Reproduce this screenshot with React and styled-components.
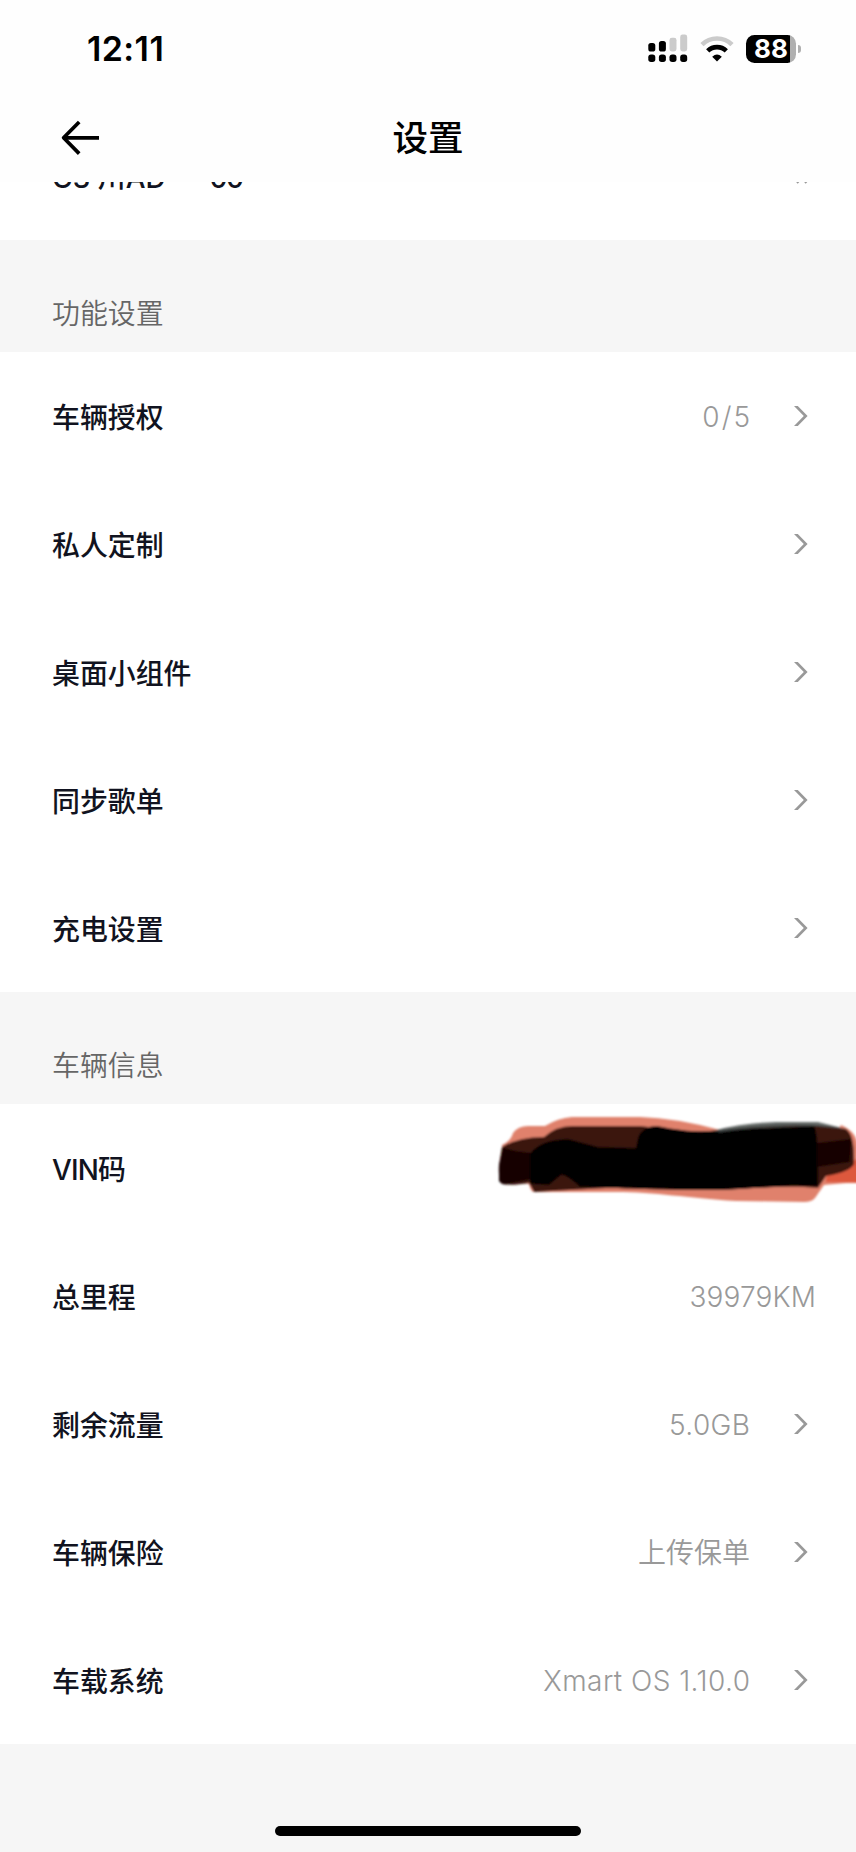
import React from 'react';
import styled, { createGlobalStyle } from 'styled-components';

const functionItems = [
  { label: '车辆授权', value: '0/5', spacing: 2, arrow: true },
  { label: '私人定制', arrow: true },
  { label: '桌面小组件', arrow: true },
  { label: '同步歌单', arrow: true },
  { label: '充电设置', arrow: true },
];

const vehicleItems = [
  { label: 'VIN码', labelSpacing: -0.8, hidden: true },
  { label: '总里程', value: '39979KM', spacing: 0.15 },
  { label: '剩余流量', value: '5.0GB', spacing: 0.4, arrow: true },
  { label: '车辆保险', value: '上传保单', arrow: true },
  { label: '车载系统', value: 'Xmart OS 1.10.0', spacing: 0.45, arrow: true },
];

const SignalIcon = () => (
  <svg width="40" height="30" viewBox="0 0 40 30">
    <rect x="0.3" y="9" width="7" height="8.5" rx="2.6" />
    <rect x="10.9" y="7" width="7" height="10.5" rx="2.6" />
    <rect x="21.5" y="3.8" width="7" height="13.7" rx="2.4" fill="#cbcbcb" />
    <rect x="32.2" y="0.5" width="7" height="17" rx="2.4" fill="#cbcbcb" />
    <rect x="0.3" y="20.5" width="7" height="7.4" rx="2.7" />
    <rect x="10.9" y="20.5" width="7" height="7.4" rx="2.7" />
    <rect x="21.5" y="20.5" width="7" height="7.4" rx="2.7" />
    <rect x="32.2" y="20.5" width="7" height="7.4" rx="2.7" />
  </svg>
);

const WifiIcon = () => (
  <svg width="34" height="26" viewBox="0 0 34 26" fill="none">
    <path d="M2 8.6 A21.5 21.5 0 0 1 32 8.6" stroke="#cbcbcb" strokeWidth="4.6" />
    <path d="M7.7 14.9 A13.3 13.3 0 0 1 26.3 14.9" stroke="#000" strokeWidth="4.6" />
    <path d="M17 25.5 L12.2 20.7 Q17 16.5 21.8 20.7 Z" fill="#000" />
  </svg>
);

const BackIcon = () => (
  <svg width="40" height="36" viewBox="0 0 40 36" fill="none" stroke="#000" strokeWidth="3.7">
    <path d="M19.2 2 L3.6 17.8 L19.2 33.6" strokeLinejoin="round" />
    <path d="M3.6 17.8 H39" />
  </svg>
);

const ArrowIcon = () => (
  <svg width="14" height="20" viewBox="0 0 14 20">
    <path d="M0 0 H3.8 L13.6 10 L3.8 20 H0 L9.8 10 Z" fill="#999" />
  </svg>
);

const DoubleArrowIcon = () => (
  <svg width="18" height="15" viewBox="0 0 18 15" fill="none" stroke="#999" strokeWidth="2">
    <path d="M2 1 L8 7.5 L2 14" />
    <path d="M10 1 L16 7.5 L10 14" />
  </svg>
);

// marker strokes painted over the VIN number
const MarkerStrokes = () => (
  <svg width="360" height="100" viewBox="0 0 360 100">
    <defs>
      <filter id="soft" x="-5%" y="-10%" width="110%" height="120%">
        <feGaussianBlur stdDeviation="1.2" />
      </filter>
    </defs>
    <g filter="url(#soft)">
      <path
        d="M6 41 Q15 37 17 29 Q22 22 32 22 L49 22 Q62 14 76 13 L144 13 Q180 14 224 26 L340 30 L345 21 Q362 28 362 45 L360 78 L328 81 L319 94 Q316 98 308 98 L240 97 C190 94 160 88 120 88 L38 88 Q35 88 33 80 L10 76 Z"
        fill="#e0816c"
      />
      <path d="M330 78 L331 67 L362 55 L362 79 Z" fill="#dd583e" />
      <path
        d="M6 43 Q22 33 48 33 Q60 22 76 22 L145 22 Q180 27 205 28 L232 25 Q290 18 330 22 L350 25 Q359 31 358 60 Q354 68 330 72 L322 84 C285 80 250 86 200 86 C150 86 130 84 110 84 L38 88 L33 79 Q15 82 6 80 Q2 75 3 61 Z"
        fill="#3b1810"
      />
      <path d="M7 44 L20 47 L44 50 L46 73 L15 79 Q6 82 3 77 L3 62 Z" fill="#140503" />
      <path
        d="M142 34 Q146 22 161 22 C195 29 210 28 240 25 L318 22 Q323 30 322 82 C280 80 250 87 200 86 L84 83 Q70 70 65 71 L53 81 L34 80 L34 50 Q43 36 72 35 L102 43 L140 44 Z"
        fill="#000"
      />
      <path d="M321 39 L355 35 L354 58 L321 63 Z" fill="#130402" />
      <path d="M217 27 Q245 19 280 18 L322 18 L350 25 L318 22 Q260 23 225 28 Z" fill="#4a5150" opacity="0.85" />
    </g>
  </svg>
);

const SettingRow = ({ item }) => (
  <Row>
    <RowLabel $spacing={item.labelSpacing}>{item.label}</RowLabel>
    {item.hidden && (
      <HiddenValue>
        <MarkerStrokes />
      </HiddenValue>
    )}
    {item.value && <RowValue $spacing={item.spacing}>{item.value}</RowValue>}
    {item.arrow && (
      <ArrowBox>
        <ArrowIcon />
      </ArrowBox>
    )}
  </Row>
);

const App = () => {
  return (
    <Screen>
      <GlobalStyle />
      <Header>
        <StatusBar>
          <Time>12:11</Time>
          <StatusIcons>
            <SignalIcon />
            <WifiIcon />
            <Battery>
              <BatteryBody>
                <BatteryText>88</BatteryText>
              </BatteryBody>
              <BatteryTip />
            </Battery>
          </StatusIcons>
        </StatusBar>
        <NavBar>
          <BackButton aria-label="返回">
            <BackIcon />
          </BackButton>
          <Title>设置</Title>
        </NavBar>
      </Header>

      <Content>
        <CarRow>
          <RowLabel>G3 川AD</RowLabel>
          <PlateEnd $spacing={-1.6}>00</PlateEnd>
          <CarArrow>
            <DoubleArrowIcon />
          </CarArrow>
        </CarRow>
        <SectionTitle>功能设置</SectionTitle>
        {functionItems.map((item) => (
          <SettingRow key={item.label} item={item} />
        ))}
        <SectionTitle>车辆信息</SectionTitle>
        {vehicleItems.map((item) => (
          <SettingRow key={item.label} item={item} />
        ))}
      </Content>

      <Footer>
        <HomeIndicator />
      </Footer>
    </Screen>
  );
};

const GlobalStyle = createGlobalStyle`
  * {
    box-sizing: border-box;
  }

  body {
    margin: 0;
    background: #f6f6f6;
    font-family: Inter, 'Noto Sans CJK SC', sans-serif;
  }

  svg {
    display: block;
    flex-shrink: 0;
  }
`;

const Screen = styled.div`
  display: flex;
  flex-direction: column;
  width: 856px;
  height: 1852px;
  overflow: hidden;
  background: #f6f6f6;
`;

const Header = styled.header`
  height: 182px;
  flex-shrink: 0;
  background: #fefefe;
`;

const StatusBar = styled.div`
  display: flex;
  align-items: center;
  justify-content: space-between;
  height: 97px;
  padding: 0 55px 0 87px;
`;

const Time = styled.div`
  padding-top: 1px;
  font-size: 34px;
  font-weight: 600;
  line-height: 40px;
  letter-spacing: 0.4px;
  color: #000;
`;

const StatusIcons = styled.div`
  display: flex;
  align-items: center;
  gap: 12px;
`;

const Battery = styled.div`
  display: flex;
  align-items: center;
  gap: 2px;
`;

const BatteryBody = styled.div`
  display: flex;
  align-items: center;
  justify-content: center;
  width: 50px;
  height: 28px;
  border-radius: 8.5px;
  background: linear-gradient(90deg, #000 44px, #b0b0b0 44px);
`;

const BatteryText = styled.span`
  font-size: 26px;
  font-weight: 700;
  line-height: 28px;
  letter-spacing: 0.2px;
  color: #fff;
`;

const BatteryTip = styled.div`
  width: 3px;
  height: 8px;
  border-radius: 0 4px 4px 0;
  background: #b0b0b0;
`;

const NavBar = styled.div`
  display: grid;
  grid-template-columns: 100px 1fr 100px;
  align-items: center;
  height: 82px;
`;

const BackButton = styled.button`
  padding: 0 0 0 60px;
  border: none;
  background: none;
`;

const Title = styled.h1`
  margin: 0;
  padding-top: 2px;
  font-size: 35.5px;
  font-weight: 500;
  line-height: 50px;
  text-align: center;
  color: #000;
`;

const Content = styled.main`
  flex-shrink: 0;
  height: 1562px;
  overflow: hidden;
`;

const Row = styled.div`
  display: flex;
  align-items: center;
  height: 128px;
  padding: 0 40px 0 52px;
  background: #fff;
`;

const CarRow = styled(Row)`
  margin-top: -70px;
`;

const RowLabel = styled.span`
  padding-top: 3px;
  font-size: 27.9px;
  font-weight: 500;
  line-height: 40px;
  letter-spacing: ${({ $spacing = 0 }) => $spacing}px;
  white-space: pre;
  color: #111320;
`;

const PlateEnd = styled(RowLabel)`
  margin-left: 44px;
`;

const RowValue = styled.span`
  margin-left: auto;
  margin-right: ${({ $spacing = 0 }) => -$spacing}px;
  padding-top: 2px;
  font-size: 28px;
  font-weight: 350;
  line-height: 40px;
  letter-spacing: ${({ $spacing = 0 }) => $spacing}px;
  color: #999;
`;

const ArrowBox = styled.span`
  display: flex;
  justify-content: flex-end;
  width: 66px;
  padding-right: 8px;

  ${RowLabel} + & {
    margin-left: auto;
  }
`;

const CarArrow = styled.span`
  margin-left: auto;
  padding-right: 3px;
`;

const HiddenValue = styled.span`
  margin: -28px -40px 0 auto;
`;

const SectionTitle = styled.h2`
  display: flex;
  align-items: flex-end;
  height: 112px;
  margin: 0;
  padding: 0 52px 18px;
  font-size: 27.9px;
  font-weight: 350;
  line-height: 40px;
  color: #666;
`;

const Footer = styled.footer`
  display: flex;
  flex: 1;
  align-items: flex-end;
  justify-content: center;
  padding-bottom: 16px;
`;

const HomeIndicator = styled.div`
  width: 306px;
  height: 10px;
  border-radius: 5px;
  background: #000;
`;

export default App;
